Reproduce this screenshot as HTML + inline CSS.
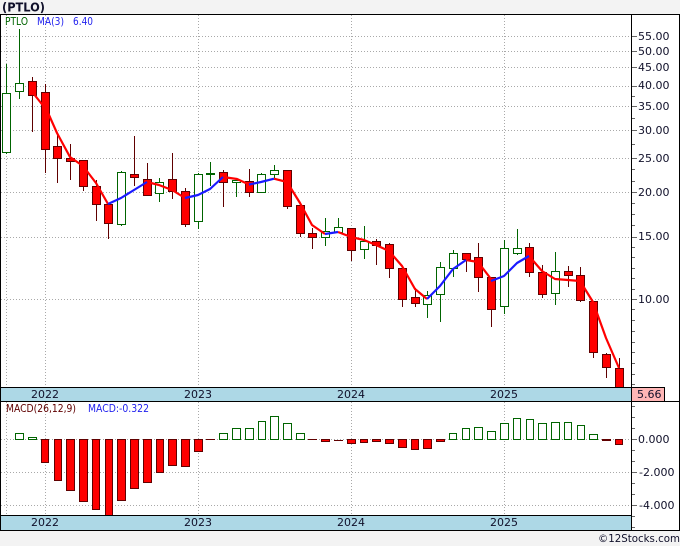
<!DOCTYPE html>
<html><head><meta charset="utf-8"><style>
html,body{margin:0;padding:0;background:#f3f3f3}
svg{display:block}
text{font-family:"DejaVu Sans",Verdana,sans-serif;font-size:11px;fill:#10102a}
.c{text-anchor:middle}
</style></head><body>
<svg width="680" height="546" viewBox="0 0 680 546" xmlns="http://www.w3.org/2000/svg">
<rect x="0" y="0" width="680" height="546" fill="#f3f3f3"/>
<rect x="0" y="14" width="680" height="516" fill="#fff"/>
<text x="2" y="11.5" textLength="43" lengthAdjust="spacingAndGlyphs" style="font-weight:bold;font-size:12px" fill="#10102a">(PTLO)</text>

<!-- grid -->
<g stroke="#a9a9a9" stroke-width="1" stroke-dasharray="1 2" fill="none" shape-rendering="crispEdges">
<path d="M1 36.5H632M1 51.5H632M1 67.5H632M1 86.5H632M1 106.5H632M1 130.5H632M1 158.5H632M1 192.5H632M1 237.5H632M1 299.5H632"/>
<path d="M1 439.5H632M1 472.5H632M1 505.5H632"/>
<path d="M6.5 15V387M45.5 15V387M198.5 15V387M351.5 15V387M504.5 15V387"/>
<path d="M6.5 402V515M45.5 402V515M198.5 402V515M351.5 402V515M504.5 402V515"/>
</g>

<!-- wicks -->
<g fill="none" stroke-width="1" shape-rendering="crispEdges">
<path stroke="#006400" d="M6.5 64V154M19.5 29V99M121.5 171V226M159.5 178V202M198.5 173V229M210.5 162V186M236.5 180V197M261.5 173V193M274.5 165V178M325.5 218V246M338.5 218V233M364.5 226V259M427.5 291V318M440.5 262V322M453.5 250V277M504.5 240V314M517.5 229V255M555.5 252V305"/>
<path stroke="#600000" d="M32.5 77V132M45.5 84V173M57.5 133V183M70.5 144V180M83.5 160V191M96.5 180V221M108.5 204V239M134.5 136V186M147.5 163V195M172.5 153V199M185.5 188V227M223.5 170V207M249.5 169V197M287.5 170V209M300.5 205V237M312.5 228V249M351.5 228V261M376.5 239V265M389.5 243V278M402.5 266V307M415.5 288V307M466.5 253V272M478.5 243V292M491.5 277V327M529.5 243V277M542.5 265V298M568.5 266V287M580.5 267V302M593.5 301V358M606.5 353V378M619.5 358V387"/>
</g>

<!-- green candles -->
<g fill="#fff" stroke="#006400" stroke-width="1" shape-rendering="crispEdges">
<rect x="2.5" y="93.5" width="8" height="59"/>
<rect x="15.5" y="83.5" width="8" height="8"/>
<rect x="117.5" y="172.5" width="8" height="52"/>
<rect x="155.5" y="182.5" width="8" height="11"/>
<rect x="194.5" y="174.5" width="8" height="47"/>
<rect x="206.5" y="173.5" width="8" height="1"/>
<rect x="232.5" y="180.5" width="8" height="2"/>
<rect x="257.5" y="174.5" width="8" height="18"/>
<rect x="270.5" y="170.5" width="8" height="4"/>
<rect x="321.5" y="231.5" width="8" height="6"/>
<rect x="334.5" y="227.5" width="8" height="5"/>
<rect x="360.5" y="241.5" width="8" height="8"/>
<rect x="423.5" y="295.5" width="8" height="9"/>
<rect x="436.5" y="267.5" width="8" height="27"/>
<rect x="449.5" y="253.5" width="8" height="15"/>
<rect x="500.5" y="248.5" width="8" height="58"/>
<rect x="513.5" y="248.5" width="8" height="5"/>
<rect x="551.5" y="271.5" width="8" height="22"/>
</g>

<!-- red candles -->
<g fill="#ff0000" stroke="#600000" stroke-width="1" shape-rendering="crispEdges">
<rect x="28.5" y="81.5" width="8" height="14"/>
<rect x="41.5" y="92.5" width="8" height="57"/>
<rect x="53.5" y="146.5" width="8" height="12"/>
<rect x="66.5" y="158.5" width="8" height="3"/>
<rect x="79.5" y="160.5" width="8" height="26"/>
<rect x="92.5" y="186.5" width="8" height="18"/>
<rect x="104.5" y="204.5" width="8" height="19"/>
<rect x="130.5" y="174.5" width="8" height="3"/>
<rect x="143.5" y="179.5" width="8" height="16"/>
<rect x="168.5" y="179.5" width="8" height="12"/>
<rect x="181.5" y="191.5" width="8" height="33"/>
<rect x="219.5" y="172.5" width="8" height="10"/>
<rect x="245.5" y="181.5" width="8" height="11"/>
<rect x="283.5" y="170.5" width="8" height="36"/>
<rect x="296.5" y="205.5" width="8" height="28"/>
<rect x="308.5" y="233.5" width="8" height="4"/>
<rect x="347.5" y="228.5" width="8" height="22"/>
<rect x="372.5" y="241.5" width="8" height="4"/>
<rect x="385.5" y="244.5" width="8" height="24"/>
<rect x="398.5" y="268.5" width="8" height="31"/>
<rect x="411.5" y="297.5" width="8" height="6"/>
<rect x="462.5" y="253.5" width="8" height="6"/>
<rect x="474.5" y="257.5" width="8" height="20"/>
<rect x="487.5" y="277.5" width="8" height="32"/>
<rect x="525.5" y="247.5" width="8" height="25"/>
<rect x="538.5" y="272.5" width="8" height="22"/>
<rect x="564.5" y="271.5" width="8" height="4"/>
<rect x="576.5" y="275.5" width="8" height="25"/>
<rect x="589.5" y="301.5" width="8" height="51"/>
<rect x="602.5" y="354.5" width="8" height="13"/>
<rect x="615.5" y="368.5" width="8" height="19"/>
</g>

<!-- MA line -->
<g fill="none" stroke-width="2.2" stroke-linejoin="round">
<g stroke="#ff0000">
<polyline points="33,93 45,108 49,115 57,133 70,157 83,166 96,183 108,204"/>
<polyline points="147,182 159,185 172,190 185,198"/>
<polyline points="223,177 237,179 249,184.5"/>
<polyline points="274,178.7 287,182 300,203 312,225 325,234"/>
<polyline points="338,232 351,237 364,240 376,245 389,251 402,266 415,289 427,299"/>
<polyline points="466,260 478,262 491,279"/>
<polyline points="529,256 542,271 555,279 568,280 580,281 593,302 606,338 619,368"/>
</g>
<g stroke="#1a1aff">
<polyline points="108,204 121,198 134,190 147,182"/>
<polyline points="185,198 198,195 210,189 223,177"/>
<polyline points="249,184.5 261,182 274,178.7"/>
<polyline points="325,234 338,232"/>
<polyline points="427,299 440,286 453,269 466,260"/>
<polyline points="491,281 504,276 517,263 529,256"/>
</g>
</g>

<!-- MACD green bars -->
<g fill="#fff" stroke="#006400" stroke-width="1" shape-rendering="crispEdges">
<rect x="15.5" y="433.5" width="8" height="6"/>
<rect x="28.5" y="437.5" width="8" height="2"/>
<rect x="219.5" y="433.5" width="8" height="6"/>
<rect x="232.5" y="428.5" width="8" height="11"/>
<rect x="245.5" y="428.5" width="8" height="11"/>
<rect x="258.5" y="421.5" width="7" height="18"/>
<rect x="270.5" y="416.5" width="8" height="23"/>
<rect x="283.5" y="423.5" width="8" height="16"/>
<rect x="296.5" y="433.5" width="8" height="6"/>
<rect x="449.5" y="433.5" width="7" height="6"/>
<rect x="462.5" y="428.5" width="7" height="11"/>
<rect x="474.5" y="427.5" width="8" height="12"/>
<rect x="487.5" y="431.5" width="8" height="8"/>
<rect x="500.5" y="423.5" width="8" height="16"/>
<rect x="513.5" y="418.5" width="7" height="21"/>
<rect x="526.5" y="419.5" width="7" height="20"/>
<rect x="538.5" y="423.5" width="8" height="16"/>
<rect x="551.5" y="422.5" width="8" height="17"/>
<rect x="564.5" y="422.5" width="7" height="17"/>
<rect x="577.5" y="425.5" width="7" height="14"/>
<rect x="589.5" y="434.5" width="8" height="5"/>
</g>
<!-- MACD red bars -->
<g fill="#ff0000" stroke="#600000" stroke-width="1" shape-rendering="crispEdges">
<rect x="41.5" y="439.5" width="7" height="23"/>
<rect x="54.5" y="439.5" width="7" height="41"/>
<rect x="66.5" y="439.5" width="8" height="51"/>
<rect x="79.5" y="439.5" width="8" height="62"/>
<rect x="92.5" y="439.5" width="7" height="70"/>
<rect x="105.5" y="439.5" width="7" height="76"/>
<rect x="117.5" y="439.5" width="8" height="61"/>
<rect x="130.5" y="439.5" width="8" height="49"/>
<rect x="143.5" y="439.5" width="8" height="43"/>
<rect x="156.5" y="439.5" width="7" height="33"/>
<rect x="168.5" y="439.5" width="8" height="26"/>
<rect x="181.5" y="439.5" width="8" height="27"/>
<rect x="194.5" y="439.5" width="8" height="12"/>
<rect x="321.5" y="439.5" width="8" height="2"/>
<rect x="347.5" y="439.5" width="8" height="4"/>
<rect x="360.5" y="439.5" width="7" height="3"/>
<rect x="372.5" y="439.5" width="8" height="2"/>
<rect x="385.5" y="439.5" width="8" height="4"/>
<rect x="398.5" y="439.5" width="8" height="8"/>
<rect x="411.5" y="439.5" width="7" height="10"/>
<rect x="423.5" y="439.5" width="8" height="9"/>
<rect x="436.5" y="439.5" width="8" height="2"/>
<rect x="615.5" y="439.5" width="7" height="5"/>
</g>
<g stroke="#600000" stroke-width="1" shape-rendering="crispEdges" fill="none">
<path d="M206 439.5H215M308 439.5H317M334 440.5H343M602 440.5H611M602 439.5H611"/>
</g>

<!-- date strips -->
<rect x="0" y="387" width="631" height="15" fill="#add8e6"/>
<rect x="0" y="516" width="631" height="15" fill="#add8e6"/>
<rect x="632" y="388" width="32" height="13" fill="#ffb6b6"/>

<!-- borders -->
<g stroke="#000" stroke-width="1" fill="none" shape-rendering="crispEdges">
<path d="M0 14.5H680"/>
<path d="M0 387.5H664M0 401.5H680M664.5 387V401"/>
<path d="M0 515.5H632M0 530.5H680"/>
<path d="M631.5 14V530"/>
<path d="M0.5 14V530M679.5 14V530"/>
</g>
<path d="M0 14V530" stroke="#000" stroke-width="2" shape-rendering="crispEdges" fill="none"/>

<!-- ticks -->
<g stroke="#666" stroke-width="1" fill="none" shape-rendering="crispEdges">
<path d="M632 36.5H637M632 51.5H637M632 67.5H637M632 86.5H637M632 106.5H637M632 130.5H637M632 158.5H637M632 192.5H637M632 237.5H637M632 299.5H637"/>
<path d="M632 96.5H635M632 118.5H635M632 144.5H635M632 169.5H635M632 181.5H635M632 203.5H635M632 214.5H635M632 225.5H635M632 247.5H635M632 257.5H635M632 268.5H635M632 278.5H635M632 289.5H635M632 309.5H635M632 320.5H635M632 331.5H635M632 342.5H635M632 352.5H635M632 363.5H635M632 374.5H635M632 384.5H635"/>
<path d="M632 406.5H635M632 417.5H635M632 428.5H635M632 450.5H635M632 461.5H635M632 483.5H635M632 494.5H635M632 516.5H635M632 527.5H635"/>
<path d="M632 439.5H637M632 472.5H637M632 505.5H637"/>
</g>

<!-- axis labels -->
<text x="638" y="40">55.00</text>
<text x="638" y="55">50.00</text>
<text x="638" y="71">45.00</text>
<text x="638" y="89">40.00</text>
<text x="638" y="110">35.00</text>
<text x="638" y="134">30.00</text>
<text x="638" y="162">25.00</text>
<text x="638" y="196">20.00</text>
<text x="638" y="240">15.00</text>
<text x="638" y="303">10.00</text>
<text x="637" y="398">5.66</text>
<text x="638" y="443">0.000</text>
<text x="639" y="476" text-anchor="start">-2.000</text>
<text x="639" y="509" text-anchor="start">-4.000</text>

<text class="c" x="45" y="398">2022</text>
<text class="c" x="198" y="398">2023</text>
<text class="c" x="351" y="398">2024</text>
<text class="c" x="504" y="398">2025</text>
<text class="c" x="45" y="526">2022</text>
<text class="c" x="198" y="526">2023</text>
<text class="c" x="351" y="526">2024</text>
<text class="c" x="504" y="526">2025</text>

<!-- legends -->
<text x="5" y="25" textLength="23" lengthAdjust="spacingAndGlyphs" style="font-size:10.5px;fill:#006400">PTLO</text>
<text x="37" y="25" textLength="27" lengthAdjust="spacingAndGlyphs" style="font-size:10.5px;fill:#2222ee">MA(3)</text>
<text x="73" y="25" textLength="20" lengthAdjust="spacingAndGlyphs" style="font-size:10.5px;fill:#2222ee">6.40</text>
<text x="6" y="412" textLength="70" lengthAdjust="spacingAndGlyphs" style="font-size:10.5px;fill:#600000">MACD(26,12,9)</text>
<text x="88" y="412" textLength="61" lengthAdjust="spacingAndGlyphs" style="font-size:10.5px;fill:#2222ee">MACD:-0.322</text>

<text x="598" y="542" textLength="82" lengthAdjust="spacingAndGlyphs" style="font-size:11px;fill:#10102a">©12Stocks.com</text>
</svg>
</body></html>
